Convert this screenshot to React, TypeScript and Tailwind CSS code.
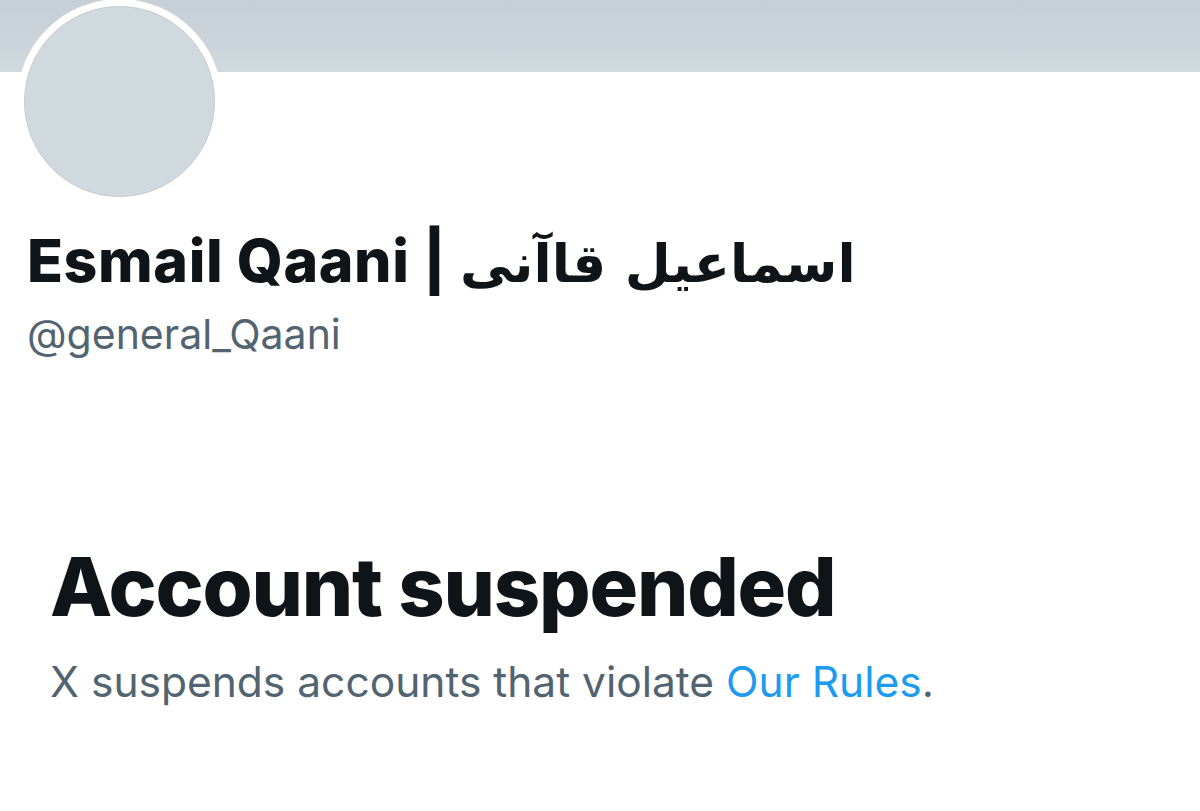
import React from 'react';

const sans = "font-['Inter','DejaVu_Sans',sans-serif]";

export default function App() {
  return (
    <div className={`w-[1200px] h-[811px] bg-white overflow-hidden ${sans}`}>
      {/* banner */}
      <div className="h-[72px] w-full bg-gradient-to-b from-[#c6ced6] to-[#cfd9de]" />

      {/* avatar */}
      <div className="ml-[17px] mt-[-73px] w-[205px] h-[205px] rounded-full bg-white p-[7px]">
        <div className="w-full h-full rounded-full bg-[#cfd9de] border border-[#c4ccd1]" />
      </div>

      {/* name + handle */}
      <div className="pl-[27px] mt-[22px]">
        <h1 className="text-[59px] leading-[70px] font-extrabold text-[#0f1419] tracking-[0.6px]">
          Esmail Qaani | <span className="font-['DejaVu_Sans',sans-serif] text-[53px] tracking-normal">اسماعیل قاآنی</span>
        </h1>
        <div className="text-[41px] leading-[56px] text-[#536471] mt-[7px]">@general_Qaani</div>
      </div>

      {/* suspended notice */}
      <div className="pl-[50px] mt-[177px]">
        <h2 className="text-[81px] leading-[96px] font-extrabold text-[#0f1419] tracking-[-1.2px]">
          Account suspended
        </h2>
        <p className="text-[42.5px] leading-[56px] text-[#536471] mt-[19px]">
          X suspends accounts that violate <span className="text-[#1d9bf0]">Our Rules</span>.
        </p>
      </div>
    </div>
  );
}
